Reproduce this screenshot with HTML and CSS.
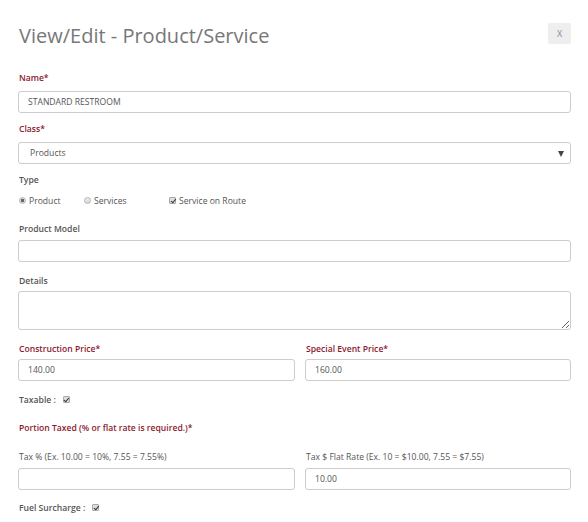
FILE: index.html
```html
<!DOCTYPE html>
<html>
<head>
<meta charset="utf-8">
<link rel="stylesheet" href="styles.css">
</head>
<body>
<div class="modal">
  <div class="header">
    <h1 class="title">View/Edit - Product/Service</h1>
    <button class="close">X</button>
  </div>
  <div class="group">
    <label class="lbl req">Name*</label>
    <div class="input">STANDARD RESTROOM</div>
  </div>
  <div class="group">
    <label class="lbl req">Class*</label>
    <div class="input select"><span class="sel-text">Products</span><span class="arrow"></span></div>
  </div>
  <div class="group type">
    <label class="lbl">Type</label>
    <div class="type-row">
      <span class="opt o1"><span class="radio checked"></span>Product</span>
      <span class="opt o2"><span class="radio"></span>Services</span>
      <span class="opt"><span class="check"></span>Service on Route</span>
    </div>
  </div>
  <div class="group g-model">
    <label class="lbl">Product Model</label>
    <div class="input"></div>
  </div>
  <div class="group g-details">
    <label class="lbl">Details</label>
    <textarea class="textarea"></textarea>
  </div>
  <div class="group cols g-price">
    <div>
      <label class="lbl req">Construction Price*</label>
      <div class="input">140.00</div>
    </div>
    <div>
      <label class="lbl req">Special Event Price*</label>
      <div class="input">160.00</div>
    </div>
  </div>
  <div class="group inline taxable">
    <span class="lbl">Taxable :</span><span class="check"></span>
  </div>
  <div class="group portion">
    <label class="lbl req">Portion Taxed (% or flat rate is required.)*</label>
  </div>
  <div class="group cols g-tax">
    <div>
      <label class="lbl plain">Tax % (Ex. 10.00 = 10%, 7.55 = 7.55%)</label>
      <div class="input"></div>
    </div>
    <div>
      <label class="lbl plain">Tax $ Flat Rate (Ex. 10 = $10.00, 7.55 = $7.55)</label>
      <div class="input">10.00</div>
    </div>
  </div>
  <div class="group inline fuel">
    <span class="lbl">Fuel Surcharge :</span><span class="check"></span>
  </div>
</div>
</body>
</html>
```
FILE: styles.css
```css
* { box-sizing: border-box; }
html, body { margin: 0; padding: 0; background: #fff; }
body {
  font-family: "Open Sans", "Liberation Sans", sans-serif;
  font-size: 8.6px;
  color: #555;
}
.modal {
  width: 588px;
  padding: 0 17px 0 18px;
}
.header {
  display: flex;
  justify-content: space-between;
  align-items: flex-start;
  height: 72px;
  padding-top: 23px;
}
.title {
  margin: -1px 0 0 0;
  font-weight: 400;
  font-size: 20px;
  line-height: 28px;
  color: #777;
  padding-left: 1px;
}
.close {
  width: 23px;
  height: 21px;
  border: none;
  border-radius: 2px;
  background: #eee;
  color: #7a8aa8;
  font-family: "Open Sans", sans-serif;
  font-size: 9px;
  padding: 0;
  margin: 0;
}
.group { margin-bottom: 10px; }
.lbl {
  display: block;
  font-weight: 600;
  font-size: 8.6px;
  line-height: 13px;
  color: #555;
  margin-bottom: 6px;
  padding-left: 1px;
}
.lbl.req { color: #8b1a2e; }
.lbl.plain { font-weight: 400; }
.input {
  height: 22px;
  border: 1px solid #ccc;
  border-radius: 3px;
  padding: 0 9px;
  line-height: 20px;
  font-size: 8.6px;
  color: #555;
  background: #fff;
}
.select {
  display: flex;
  justify-content: space-between;
  align-items: center;
  padding: 0 6px 0 11px;
}
.arrow {
  width: 0; height: 0;
  border-left: 3.5px solid transparent;
  border-right: 3.5px solid transparent;
  border-top: 6px solid #444;
  margin-top: 1px;
}
.type { margin-bottom: 15px; }
.type .lbl { margin-bottom: 7px; }
.type-row {
  display: flex;
  align-items: center;
  height: 14px;
  font-size: 8.6px;
  color: #555;
}
.opt { display: inline-flex; align-items: center; }
.o1 { width: 65px; padding-left: 1px; }
.o2 { width: 86px; padding-left: 1px; }
.radio {
  width: 7px; height: 7px;
  border-radius: 50%;
  border: 1px solid #b5b5b5;
  background: linear-gradient(#eee, #d6d6d6);
  margin-right: 3px;
  position: relative;
  top: -1px;
}
.radio.checked {
  background: radial-gradient(circle, #666 0 1.4px, #ddd 1.9px);
}
.check {
  display: inline-block;
  width: 7px; height: 7px;
  border: 1px solid #aaa;
  border-radius: 1px;
  background: #ddd;
  margin-right: 3px;
  position: relative;
  top: -1px;
}
.check::after {
  content: "";
  position: absolute;
  left: 1.5px; top: 0px;
  width: 2px; height: 3.5px;
  border-right: 1.2px solid #333;
  border-bottom: 1.2px solid #333;
  transform: rotate(40deg);
}
.g-model { margin-bottom: 13px; }
.g-model .lbl { margin-bottom: 4px; }
.g-details { margin-bottom: 13px; }
.g-details .lbl { margin-bottom: 3px; }
.g-price .lbl { margin-bottom: 3px; }
.g-tax .lbl { margin-bottom: 4px; }
.textarea {
  display: block;
  width: 100%;
  height: 39px;
  border: 1px solid #ccc;
  border-radius: 3px;
  margin: 0;
  padding: 4px;
  font-family: inherit;
  font-size: 9px;
  resize: vertical;
}
.cols {
  display: grid;
  grid-template-columns: 277px 1fr;
  column-gap: 10px;
}
.inline {
  display: flex;
  align-items: center;
  height: 14px;
}
.taxable { margin-top: 12px; margin-bottom: 15px; }
.fuel { margin-top: 11px; }
.inline .lbl { margin: 0 7px 0 0; display: inline-block; }
.portion { margin-bottom: 16px; }
.portion .lbl { margin-bottom: 0; }
```
